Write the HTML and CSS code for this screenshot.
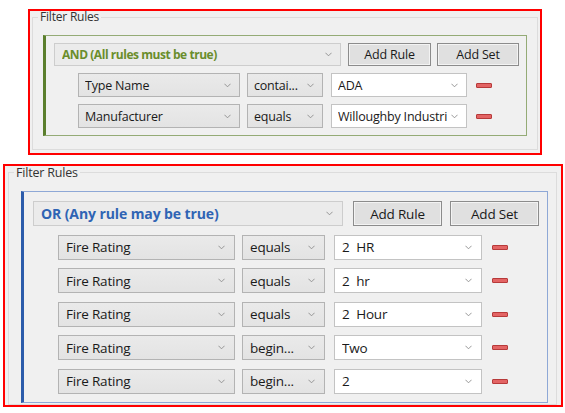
FILE: index.html
```html
<!DOCTYPE html>
<html>
<head>
<meta charset="utf-8">
<link rel="stylesheet" href="styles.css">
</head>
<body>
<div class="panel panel-a">
  <fieldset class="group">
    <legend>Filter Rules</legend>
    <div class="set set-and">
      <div class="set-head">
        <div class="combo logic"><span class="txt">AND (All rules must be true)</span><svg class="chev" viewBox="0 0 8 5"><polyline points="0.5,0.5 4,4 7.5,0.5"/></svg></div>
        <button class="btn">Add Rule</button>
        <button class="btn">Add Set</button>
      </div>
      <div class="rule">
        <div class="combo field"><span class="txt">Type Name</span><svg class="chev" viewBox="0 0 8 5"><polyline points="0.5,0.5 4,4 7.5,0.5"/></svg></div>
        <div class="combo op"><span class="txt">contai...</span><svg class="chev" viewBox="0 0 8 5"><polyline points="0.5,0.5 4,4 7.5,0.5"/></svg></div>
        <div class="combo value"><span class="txt">ADA</span><svg class="chev" viewBox="0 0 8 5"><polyline points="0.5,0.5 4,4 7.5,0.5"/></svg></div>
        <span class="minus"></span>
      </div>
      <div class="rule">
        <div class="combo field"><span class="txt">Manufacturer</span><svg class="chev" viewBox="0 0 8 5"><polyline points="0.5,0.5 4,4 7.5,0.5"/></svg></div>
        <div class="combo op"><span class="txt">equals</span><svg class="chev" viewBox="0 0 8 5"><polyline points="0.5,0.5 4,4 7.5,0.5"/></svg></div>
        <div class="combo value"><span class="txt clip">Willoughby Industries</span><svg class="chev" viewBox="0 0 8 5"><polyline points="0.5,0.5 4,4 7.5,0.5"/></svg></div>
        <span class="minus"></span>
      </div>
    </div>
  </fieldset>
</div>

<div class="panel panel-b">
  <fieldset class="group">
    <legend>Filter Rules</legend>
    <div class="set set-or">
      <div class="set-head">
        <div class="combo logic"><span class="txt">OR (Any rule may be true)</span><svg class="chev" viewBox="0 0 8 5"><polyline points="0.5,0.5 4,4 7.5,0.5"/></svg></div>
        <button class="btn">Add Rule</button>
        <button class="btn">Add Set</button>
      </div>
      <div class="rule">
        <div class="combo field"><span class="txt">Fire Rating</span><svg class="chev" viewBox="0 0 8 5"><polyline points="0.5,0.5 4,4 7.5,0.5"/></svg></div>
        <div class="combo op"><span class="txt">equals</span><svg class="chev" viewBox="0 0 8 5"><polyline points="0.5,0.5 4,4 7.5,0.5"/></svg></div>
        <div class="combo value"><span class="txt">2&nbsp; HR</span><svg class="chev" viewBox="0 0 8 5"><polyline points="0.5,0.5 4,4 7.5,0.5"/></svg></div>
        <span class="minus"></span>
      </div>
      <div class="rule">
        <div class="combo field"><span class="txt">Fire Rating</span><svg class="chev" viewBox="0 0 8 5"><polyline points="0.5,0.5 4,4 7.5,0.5"/></svg></div>
        <div class="combo op"><span class="txt">equals</span><svg class="chev" viewBox="0 0 8 5"><polyline points="0.5,0.5 4,4 7.5,0.5"/></svg></div>
        <div class="combo value"><span class="txt">2&nbsp; hr</span><svg class="chev" viewBox="0 0 8 5"><polyline points="0.5,0.5 4,4 7.5,0.5"/></svg></div>
        <span class="minus"></span>
      </div>
      <div class="rule">
        <div class="combo field"><span class="txt">Fire Rating</span><svg class="chev" viewBox="0 0 8 5"><polyline points="0.5,0.5 4,4 7.5,0.5"/></svg></div>
        <div class="combo op"><span class="txt">equals</span><svg class="chev" viewBox="0 0 8 5"><polyline points="0.5,0.5 4,4 7.5,0.5"/></svg></div>
        <div class="combo value"><span class="txt">2&nbsp; Hour</span><svg class="chev" viewBox="0 0 8 5"><polyline points="0.5,0.5 4,4 7.5,0.5"/></svg></div>
        <span class="minus"></span>
      </div>
      <div class="rule">
        <div class="combo field"><span class="txt">Fire Rating</span><svg class="chev" viewBox="0 0 8 5"><polyline points="0.5,0.5 4,4 7.5,0.5"/></svg></div>
        <div class="combo op"><span class="txt">begin...</span><svg class="chev" viewBox="0 0 8 5"><polyline points="0.5,0.5 4,4 7.5,0.5"/></svg></div>
        <div class="combo value"><span class="txt">Two</span><svg class="chev" viewBox="0 0 8 5"><polyline points="0.5,0.5 4,4 7.5,0.5"/></svg></div>
        <span class="minus"></span>
      </div>
      <div class="rule">
        <div class="combo field"><span class="txt">Fire Rating</span><svg class="chev" viewBox="0 0 8 5"><polyline points="0.5,0.5 4,4 7.5,0.5"/></svg></div>
        <div class="combo op"><span class="txt">begin...</span><svg class="chev" viewBox="0 0 8 5"><polyline points="0.5,0.5 4,4 7.5,0.5"/></svg></div>
        <div class="combo value"><span class="txt">2</span><svg class="chev" viewBox="0 0 8 5"><polyline points="0.5,0.5 4,4 7.5,0.5"/></svg></div>
        <span class="minus"></span>
      </div>
    </div>
  </fieldset>
</div>
</body>
</html>
```

FILE: styles.css
```css
* { box-sizing: border-box; }
html, body {
  margin: 0;
  padding: 0;
  background: #ffffff;
  width: 565px;
  height: 413px;
  overflow: hidden;
}
body {
  font-family: "Open Sans", "Noto Sans", "Liberation Sans", sans-serif;
  color: #1a1a1a;
  padding-top: 9px;
}

.panel {
  border: 2px solid #ff0000;
  background: #f0f0f0;
}
.panel-a {
  margin-left: 28px;
  width: 514px;
  height: 146px;
}
.panel-b {
  margin-left: 3px;
  margin-top: 9px;
  width: 560px;
  height: 243px;
}

.group {
  border: 1px solid #dcdcdc;
  margin: 0 2px 3px 2px;
  min-width: 0;
}
.group legend {
  font-size: 12px;
  line-height: 12px;
  color: #333;
  padding: 0 2px;
  letter-spacing: -0.2px;
}
.panel-a .group { padding: 12px 10px 13px 10px; }
.panel-a .group legend { margin-left: -5px; }
.panel-b .group { margin: 0 4px 2px 3px; padding: 12px 8px 1px 12px; }
.panel-b .group legend { margin-left: -7px; line-height: 13px; font-size: 12.5px; }

.set {
  border: 1px solid;
  border-left-width: 3px;
  display: flex;
  flex-direction: column;
}
.set-and {
  border-color: #94ab76;
  border-left-color: #5b7f2d;
  padding: 7px 7px 7px 8px;
  gap: 7px;
  font-size: 12.5px;
}
.set-or {
  border-color: #8ea8d6;
  border-left-color: #2c5cab;
  padding: 9px 8px 8px 9px;
  gap: 8.5px;
  font-size: 13.5px;
}

.set-head { display: flex; }
.rule { display: flex; align-items: center; }

.combo {
  display: flex;
  align-items: center;
  border: 1px solid #b3b3b3;
  background: linear-gradient(#eaeaea, #e3e3e3);
  padding-left: 6px;
  padding-right: 8px;
  overflow: hidden;
  white-space: nowrap;
}
.combo .txt {
  flex: 1;
  overflow: hidden;
  letter-spacing: -0.2px;
}
.combo .chev {
  width: 7px;
  height: 5px;
  flex: none;
  margin-left: 4px;
}
.chev polyline {
  fill: none;
  stroke: #8a8a8a;
  stroke-width: 1;
}
.combo.value {
  background: #ffffff;
  border-color: #c3c3c3;
}
.combo.logic {
  border-color: #cdcdcd;
  background: #ebebeb;
  font-weight: 700;
  padding-left: 7px;
}
.set-and .logic { color: #6a8d2c; }
.set-and .logic .txt { font-size: 12px; letter-spacing: -0.45px; }
.set-or .logic { color: #2f64b4; }
.set-or .logic .txt { font-size: 14px; letter-spacing: -0.1px; }

.btn {
  font: inherit;
  color: #1a1a1a;
  background: #e0e0e0;
  border: 1px solid #8c8c8c;
  box-shadow: inset 0 0 0 1px #f3f3f3;
  padding: 0;
  letter-spacing: -0.2px;
}

.minus {
  display: block;
  width: 16px;
  height: 5px;
  background: #e36464;
  border: 1px solid #b73a3a;
  border-radius: 1px;
}

/* Panel A sizes */
.set-and .set-head { height: 23px; }
.set-and .logic { width: 287px; margin-right: 7px; }
.set-and .btn:nth-of-type(1) { width: 83px; margin-right: 6px; }
.set-and .btn:nth-of-type(2) { width: 82px; }
.set-and .rule { height: 24px; margin-left: 24px; }
.set-and .rule .combo { height: 24px; }
.set-and .field { width: 162px; margin-right: 7px; }
.set-and .op { width: 76px; margin-right: 8px; }
.set-and .value { width: 136px; margin-right: 9px; }

/* Panel B sizes */
.set-or .set-head { height: 25px; }
.set-or .logic { width: 310px; margin-right: 10px; }
.set-or .btn:nth-of-type(1) { width: 89px; margin-right: 8px; }
.set-or .btn:nth-of-type(2) { width: 89px; }
.set-or .rule { height: 25px; margin-left: 25px; }
.set-or .rule .combo { height: 25px; padding-left: 7px; }
.set-or .field { width: 177px; margin-right: 7px; }
.set-or .op { width: 83px; margin-right: 9px; }
.set-or .value { width: 148px; margin-right: 10px; }
.set-or .combo .chev { margin-right: 1px; }
```
